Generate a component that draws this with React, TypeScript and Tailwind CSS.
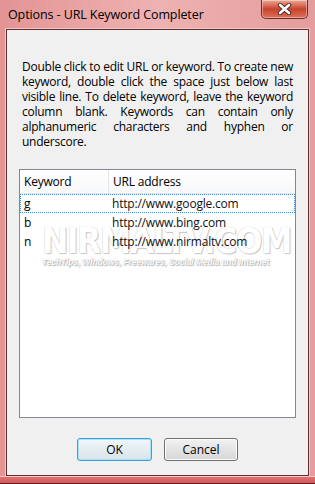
import React from "react";

const lines = [
  "Double click to edit URL or keyword. To create new",
  "keyword, double click the space just below last",
  "visible line. To delete keyword, leave the keyword",
  "column blank. Keywords can contain only",
  "alphanumeric characters and hyphen or",
];

const rows = [
  { key: "g", url: "http://www.google.com" },
  { key: "b", url: "http://www.bing.com" },
  { key: "n", url: "http://www.nirmaltv.com" },
];

function CloseButton() {
  return (
    <div className="ml-auto mr-[7px] w-[47px] h-[19px] rounded-b-[5px] border border-t-0 border-[#6e2c28] bg-gradient-to-b from-[#eba896] via-[#c9412b] to-[#dc6f58] flex items-center justify-center shadow-[inset_0_0_0_1px_rgba(255,255,255,0.4)]">
      <svg width="15" height="12" viewBox="0 0 15 12">
        <path d="M3 2 L12 10 M12 2 L3 10" stroke="#4a2a2a" strokeWidth="4.4" strokeLinecap="round" />
        <path d="M3 2 L12 10 M12 2 L3 10" stroke="#ffffff" strokeWidth="2.6" strokeLinecap="round" />
      </svg>
    </div>
  );
}

export default function App() {
  return (
    <div className="w-[315px] h-[484px] flex flex-col bg-gradient-to-r from-[#e39494] via-[#eeb2b2] to-[#e59c9c] font-['Open_Sans','Noto_Sans',sans-serif] text-black">
      {/* title bar */}
      <div className="h-[29px] flex items-start shrink-0">
        <div className="pl-[8px] pt-[7px] text-[12.5px] leading-[16px] tracking-[-0.1px]">
          Options - URL Keyword Completer
        </div>
        <CloseButton />
      </div>

      {/* client area */}
      <div className="flex-1 mx-[6px] border border-[#5c3030] outline outline-1 outline-[#f4c6c6] bg-[#f0f0f0] flex flex-col">
        <div className="mt-[29px] mx-[15px] text-[12px] leading-[15px] tracking-[-0.25px] text-black">
          {lines.map((l) => (
            <div key={l} className="text-justify [text-align-last:justify]">
              {l}
            </div>
          ))}
          <div>underscore.</div>
        </div>

        {/* list view */}
        <div className="relative mt-[20px] mx-[12px] h-[249px] border border-[#828790] bg-white text-[12px] tracking-[-0.2px]">
          {/* watermark */}
          <div className="absolute left-[22px] top-[56px] pointer-events-none select-none">
            <div className="text-[35px] leading-[31px] font-bold tracking-[-1.5px] text-white [text-shadow:0_0_1px_#b8b8b8,1px_1px_1px_#c8c8c8] font-['DejaVu_Sans_Condensed','Liberation_Sans',sans-serif]">
              NIRMALTV.COM
            </div>
            <div className="text-[8.3px] leading-[10px] font-bold italic tracking-[0px] whitespace-nowrap text-white [text-shadow:0_0_1px_#a0a0a0,1px_1px_1px_#b0b0b0] font-['Liberation_Sans',sans-serif]">
              TechTips, Windows, Freewares, Social Media and Internet
            </div>
          </div>

          <div className="relative flex h-[24px] border-b border-[#e5e5e5] bg-gradient-to-b from-white to-[#f7f8fa]">
            <div className="w-[89px] border-r border-[#e5e5e5] pl-[4px] flex items-center">Keyword</div>
            <div className="pl-[4px] flex items-center">URL address</div>
          </div>
          {rows.map((r, i) => (
            <div
              key={r.key}
              className={
                "relative flex h-[19px] items-center " +
                (i === 0 ? "border border-dotted border-[#3a8ee0]" : "border border-transparent")
              }
            >
              <div className="w-[91px] pl-[3px]">{r.key}</div>
              <div className="text-[#111]">{r.url}</div>
            </div>
          ))}
        </div>

        {/* buttons */}
        <div className="mt-[20px] flex justify-center gap-[12px]">
          <button className="w-[75px] h-[23px] rounded-[3px] border border-[#3c9fd8] bg-gradient-to-b from-[#f2f7fa] to-[#d8e3ea] text-[12px] shadow-[inset_0_0_0_1px_#a6e2f8]">
            OK
          </button>
          <button className="w-[74px] h-[23px] rounded-[3px] border border-[#707070] bg-gradient-to-b from-[#f2f2f2] to-[#d6d6d6] text-[12px] shadow-[inset_0_0_0_1px_#fcfcfc]">
            Cancel
          </button>
        </div>
      </div>

      {/* bottom frame band */}
      <div className="h-[8px] shrink-0 border-t-[1px] border-t-[#f6caca] bg-gradient-to-b from-[#e46e6e] to-[#d45a5a] border-b border-b-[#5a1e1e]" />
    </div>
  );
}
